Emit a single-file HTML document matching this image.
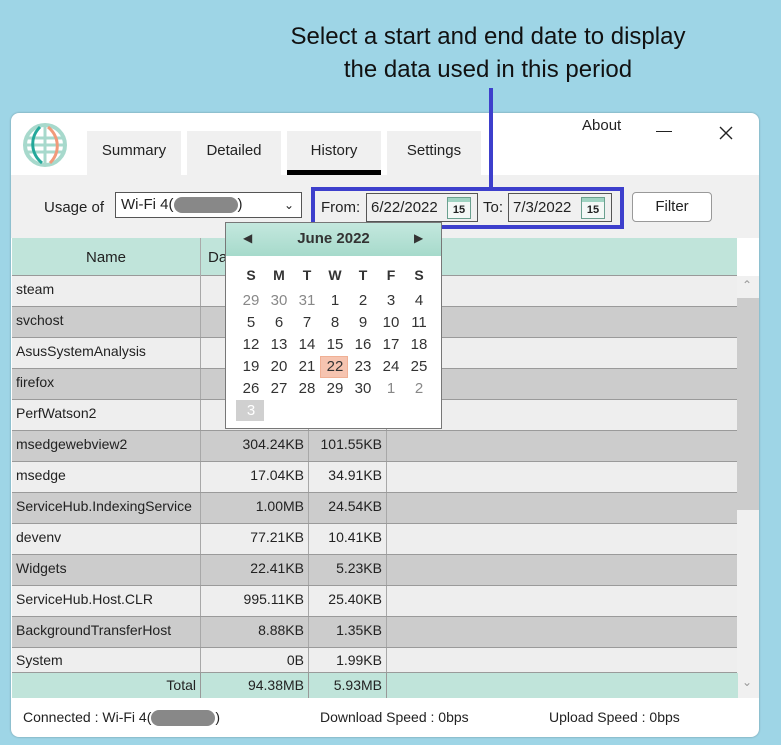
<!DOCTYPE html>
<html><head><meta charset="utf-8"><style>
*{margin:0;padding:0;box-sizing:border-box}
body{width:781px;height:745px;background:#9ed5e6;position:relative;overflow:hidden;font-family:"Liberation Sans",sans-serif;color:#222}
.a{position:absolute}
.title{left:0;width:976px;text-align:center;font-size:24px;color:#111;line-height:33px}
.win{left:11px;top:113px;width:748px;height:624px;background:#fff;border-radius:8px;overflow:hidden;box-shadow:0 0 2px rgba(0,0,0,.3)}
.tab{top:18px;width:94px;height:44px;background:#f0f0f0;font-size:15px;text-align:center;line-height:40px;color:#222}
.tb{left:0;top:62px;width:748px;height:63px;background:#f0f0f0}
.row{left:1px;width:725px;height:31px;font-size:14px;border-bottom:1px solid #9a9a9a}
.row div{position:absolute;top:0;height:100%;line-height:27px;border-right:1px solid #a8a8a8;padding:0 4px;white-space:nowrap}
.c1{left:0;width:189px}.c2{left:189px;width:108px;text-align:right}.c3{left:297px;width:78px;text-align:right}
.l{background:#eeeeee}.d{background:#cccccc}
.cal{left:225px;top:222px;width:217px;height:207px;background:#fff;border:1px solid #777}
.cal span{position:absolute;width:28px;text-align:center;font-size:15px}
.blur{display:inline-block;width:64px;height:16px;background:#888;border-radius:8px;vertical-align:middle}
.ic{width:24px;height:22px;border:1px solid #666;background:#eef;font-size:11px;font-weight:bold;text-align:center}
</style></head><body>
<div class="a title" style="top:20px">Select a start and end date to display</div>
<div class="a title" style="top:53px">the data used in this period</div>
<div class="win a">
 <svg class="a" style="left:11px;top:9px" width="46" height="46" viewBox="0 0 46 46">
  <circle cx="23" cy="23" r="20" fill="none" stroke="#a7d9cc" stroke-width="4"/>
  <path d="M5 16H41M3 23H43M5 30H41M23 3V43" stroke="#a7d9cc" stroke-width="3" fill="none"/>
  <path d="M18 5C8 15 8 31 20 41" stroke="#23a89a" stroke-width="3" fill="none"/>
  <path d="M28 41C38 31 38 15 26 5" stroke="#f19a7a" stroke-width="3" fill="none"/>
 </svg>
 <div class="a tab" style="left:76px">Summary</div>
 <div class="a tab" style="left:176px">Detailed</div>
 <div class="a tab" style="left:276px">History<div class="a" style="left:0;bottom:0;width:94px;height:5px;background:#000"></div></div>
 <div class="a tab" style="left:376px">Settings</div>
 <div class="a" style="left:571px;top:4px;font-size:15px">About</div>
 <div class="a" style="left:645px;top:18px;width:16px;height:1px;background:#222"></div>
 <svg class="a" style="left:708px;top:13px" width="14" height="14"><path d="M1 1L13 13M13 1L1 13" stroke="#222" stroke-width="1.4"/></svg>
 <div class="a tb"></div>
 <div class="a" style="left:33px;top:86px;font-size:15px">Usage of</div>
 <div class="a" style="left:104px;top:79px;width:187px;height:26px;border:1px solid #555;background:#fff;font-size:15px;line-height:24px;padding-left:5px">Wi-Fi 4(<span class="blur"></span>)<span class="a" style="right:7px;top:0;font-size:12px">&#8964;</span></div>
 <div class="a" style="left:310px;top:86px;font-size:15px">From:</div>
 <div class="a" style="left:355px;top:80px;width:112px;height:29px;border:1px solid #555;font-size:15px;line-height:27px;padding-left:4px">6/22/2022<div class="a ic" style="right:6px;top:3px;background:#f4f8f6;border-color:#6aa08f;height:22px"><div style="height:4px;background:#9fd3c1"></div><div style="line-height:16px">15</div></div></div>
 <div class="a" style="left:472px;top:86px;font-size:15px">To:</div>
 <div class="a" style="left:497px;top:80px;width:104px;height:29px;border:1px solid #555;font-size:15px;line-height:27px;padding-left:4px">7/3/2022<div class="a ic" style="right:6px;top:3px;background:#f4f8f6;border-color:#6aa08f;height:22px"><div style="height:4px;background:#9fd3c1"></div><div style="line-height:16px">15</div></div></div>
 <div class="a" style="left:621px;top:79px;width:80px;height:30px;border:1px solid #999;border-radius:4px;background:#fff;font-size:15px;text-align:center;line-height:28px">Filter</div>
 <div class="a" style="left:1px;top:125px;width:725px;height:38px;background:#c0e4da;border-bottom:1px solid #999;font-size:15px"><div class="a" style="left:0;width:189px;text-align:center;line-height:40px;border-right:1px solid #aaa;height:38px">Name</div><div class="a" style="left:196px;line-height:40px">Da</div></div>
 <div class="a" style="left:726px;top:163px;width:22px;height:422px;background:#f0f0f0"><div class="a" style="left:0;top:22px;width:22px;height:212px;background:#cccccc"></div><div class="a" style="left:5px;top:2px;font-size:12px;color:#999">&#8963;</div><div class="a" style="left:5px;top:399px;font-size:12px;color:#999">&#8964;</div></div>
 <div class="a row l" style="top:163px"><div class="c1">steam</div><div class="c2"></div><div class="c3"></div></div>
 <div class="a row d" style="top:194px"><div class="c1">svchost</div><div class="c2"></div><div class="c3"></div></div>
 <div class="a row l" style="top:225px"><div class="c1">AsusSystemAnalysis</div><div class="c2"></div><div class="c3"></div></div>
 <div class="a row d" style="top:256px"><div class="c1">firefox</div><div class="c2"></div><div class="c3"></div></div>
 <div class="a row l" style="top:287px"><div class="c1">PerfWatson2</div><div class="c2"></div><div class="c3"></div></div>
 <div class="a row d" style="top:318px"><div class="c1">msedgewebview2</div><div class="c2">304.24KB</div><div class="c3">101.55KB</div></div>
 <div class="a row l" style="top:349px"><div class="c1">msedge</div><div class="c2">17.04KB</div><div class="c3">34.91KB</div></div>
 <div class="a row d" style="top:380px"><div class="c1">ServiceHub.IndexingService</div><div class="c2">1.00MB</div><div class="c3">24.54KB</div></div>
 <div class="a row l" style="top:411px"><div class="c1">devenv</div><div class="c2">77.21KB</div><div class="c3">10.41KB</div></div>
 <div class="a row d" style="top:442px"><div class="c1">Widgets</div><div class="c2">22.41KB</div><div class="c3">5.23KB</div></div>
 <div class="a row l" style="top:473px"><div class="c1">ServiceHub.Host.CLR</div><div class="c2">995.11KB</div><div class="c3">25.40KB</div></div>
 <div class="a row d" style="top:504px"><div class="c1">BackgroundTransferHost</div><div class="c2">8.88KB</div><div class="c3">1.35KB</div></div>
 <div class="a row l" style="top:535px;height:25px"><div class="c1" style="line-height:25px">System</div><div class="c2" style="line-height:25px">0B</div><div class="c3" style="line-height:25px">1.99KB</div></div>
 <div class="a row" style="top:560px;height:25px;background:#c0e4da;border:none;width:726px"><div class="c1" style="text-align:right;line-height:25px;border-color:#999">Total</div><div class="c2" style="line-height:25px;border-color:#999">94.38MB</div><div class="c3" style="line-height:25px;border-color:#999">5.93MB</div></div>
 <div class="a" style="left:12px;top:596px;font-size:14px">Connected : Wi-Fi 4(<span class="blur" style="width:64px"></span>)</div>
 <div class="a" style="left:309px;top:596px;font-size:14px">Download Speed : 0bps</div>
 <div class="a" style="left:538px;top:596px;font-size:14px">Upload Speed : 0bps</div>
</div>
<div class="a" style="left:489px;top:88px;width:4px;height:101px;background:#3d3fcc"></div>
<div class="a" style="left:311px;top:187px;width:313px;height:42px;border:4px solid #3d3fcc"></div>
<div class="a cal">
 <div class="a" style="left:0;top:0;width:215px;height:33px;background:linear-gradient(#c4e8de,#a6dacb)"></div>
 <div class="a" style="left:17px;top:8px;font-size:12px;color:#333">&#9664;</div>
 <div class="a" style="left:188px;top:8px;font-size:12px;color:#333">&#9654;</div>
 <div class="a" style="left:0;width:215px;top:7px;text-align:center;font-size:15px;font-weight:bold;color:#333">June 2022</div>
 <div class="a" style="left:94px;top:133px;width:28px;height:22px;background:#f6c4b0;border:1px solid #f0b095"></div>
 <div class="a" style="left:10px;top:177px;width:28px;height:21px;background:#d0d0d0"></div>
</div>
<script>
var c=document.querySelector('.cal'),h='';
var cx=[11,39,67,95,123,151,179];
var dn=['S','M','T','W','T','F','S'];
dn.forEach(function(d,i){h+='<span style="left:'+cx[i]+'px;top:44px;font-weight:bold;color:#333;font-size:14px">'+d+'</span>'});
var days=[[29,30,31,1,2,3,4],[5,6,7,8,9,10,11],[12,13,14,15,16,17,18],[19,20,21,22,23,24,25],[26,27,28,29,30,1,2],[3]];
days.forEach(function(r,ri){r.forEach(function(d,i){var gray=(ri==0&&i<3)||(ri==4&&i>4);var col=ri==5?'#fff':gray?'#888':'#333';
h+='<span style="left:'+cx[i]+'px;top:'+(69+ri*22)+'px;color:'+col+'">'+d+'</span>'})});
c.insertAdjacentHTML('beforeend',h);
</script>
</body></html>
